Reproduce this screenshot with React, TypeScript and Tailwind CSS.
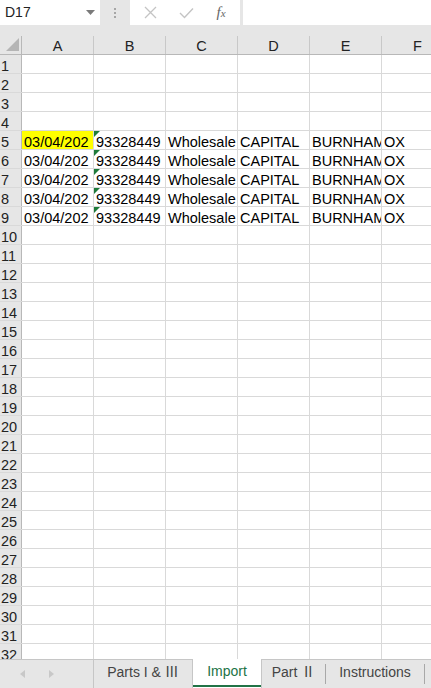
import React from 'react';

const cols = ['A', 'B', 'C', 'D', 'E', 'F'];
const dataRow = ['03/04/202', '93328449', 'Wholesale', 'CAPITAL', 'BURNHAM', 'OX'];
const rows = Array.from({ length: 32 }, (_, i) => i + 1);

function FormulaBar() {
  return (
    <div className="flex h-[36px] shrink-0 items-start bg-[#e6e6e6]">
      <div className="flex h-[25px] w-[100px] items-center justify-between bg-white pl-[5px] pr-[5px] text-[14px] text-[#222]">
        <span>D17</span>
        <svg width="9" height="5" viewBox="0 0 9 5">
          <path d="M0 0 L9 0 L4.5 5 Z" fill="#7a7a7a" />
        </svg>
      </div>
      <div className="flex h-[25px] w-[30px] flex-col items-center justify-center gap-[2px]">
        <span className="h-[2px] w-[2px] bg-[#a6a6a6]" />
        <span className="h-[2px] w-[2px] bg-[#a6a6a6]" />
        <span className="h-[2px] w-[2px] bg-[#a6a6a6]" />
      </div>
      <div className="flex h-[25px] w-[110px] items-center bg-white">
        <div className="flex w-[38px] justify-center pl-[2px]">
          <svg width="13" height="13" viewBox="0 0 13 13">
            <path d="M1 1 L12 12 M12 1 L1 12" stroke="#c4c4c4" strokeWidth="1.3" />
          </svg>
        </div>
        <div className="flex w-[36px] justify-center">
          <svg width="15" height="12" viewBox="0 0 15 12">
            <path d="M1 6 L5.5 10.5 L14 1.5" stroke="#c4c4c4" strokeWidth="1.4" fill="none" />
          </svg>
        </div>
        <div className="flex w-[34px] justify-center font-['Liberation_Serif',serif] italic text-[#666]">
          <span className="text-[15px] leading-none">f</span>
          <span className="mt-[3px] text-[11px] leading-none">x</span>
        </div>
      </div>
      <div className="ml-[3px] h-[25px] flex-1 bg-white" />
    </div>
  );
}

function HeaderRow() {
  return (
    <div className="flex h-[19px] shrink-0 border-b border-[#b8b8b8] bg-[#e6e6e6]">
      <div className="relative w-[22px] shrink-0 border-r border-[#b8b8b8]">
        <svg className="absolute left-[6px] top-[2px]" width="13" height="13" viewBox="0 0 13 13">
          <path d="M13 0 L13 13 L0 13 Z" fill="#b5b5b5" />
        </svg>
      </div>
      {cols.map((c) => (
        <div
          key={c}
          className="flex w-[72px] shrink-0 items-center justify-center border-r border-[#c8c8c8] pt-[3px] text-[14.5px] leading-none text-[#222]"
        >
          {c}
        </div>
      ))}
    </div>
  );
}

function GridRow({ n }: { n: number }) {
  const filled = n >= 5 && n <= 9;
  return (
    <div className="flex h-[19px] shrink-0 border-b border-[#d9d9d9]">
      <div className="flex w-[22px] shrink-0 items-center border-r border-[#b8b8b8] bg-[#e6e6e6] pl-[1px] pt-[4px] text-[14.5px] leading-none text-[#222]">
        {n}
      </div>
      {cols.map((c, i) => (
        <div
          key={c}
          className={`relative flex w-[72px] shrink-0 items-center overflow-hidden whitespace-nowrap border-r border-[#d9d9d9] pl-[2px] pt-[4px] text-[14.5px] leading-none text-black ${
            filled && n === 5 && i === 0 ? 'bg-[#ffff00]' : ''
          }`}
        >
          {filled && dataRow[i]}
          {filled && i === 1 && (
            <svg className="absolute left-0 top-0" width="6" height="6" viewBox="0 0 6 6">
              <path d="M0 0 L6 0 L0 6 Z" fill="#1e7b3a" />
            </svg>
          )}
        </div>
      ))}
    </div>
  );
}

function TabBar() {
  return (
    <div className="flex h-[29px] shrink-0 bg-[#e6e6e6] text-[14px] font-['Liberation_Sans','Noto_Sans_CJK_SC',sans-serif] text-[#444]">
      <div className="flex w-[93px] shrink-0 items-center border-t border-[#c6c6c6]">
        <svg className="ml-[20px]" width="5" height="8" viewBox="0 0 5 8">
          <path d="M5 0 L5 8 L0 4 Z" fill="#c8c8c8" />
        </svg>
        <svg className="ml-[24px]" width="5" height="8" viewBox="0 0 5 8">
          <path d="M0 0 L0 8 L5 4 Z" fill="#c8c8c8" />
        </svg>
      </div>
      <div className="flex w-[99px] shrink-0 items-center justify-center border-l border-t border-[#c6c6c6]">
        <span className="-mt-[4px]">Parts I &amp; Ⅲ</span>
      </div>
      <div className="relative flex w-[70px] shrink-0 items-center justify-center border-l border-r border-[#c6c6c6] bg-white text-[#217346]">
        <span className="-mt-[4px]">Import</span>
        <div className="absolute bottom-[1px] left-0 right-0 h-[2px] bg-[#217346]" />
      </div>
      <div className="flex w-[63px] shrink-0 items-center justify-center border-t border-[#c6c6c6]">
        <span className="-mt-[4px]">Part Ⅱ</span>
      </div>
      <div className="flex w-[100px] shrink-0 items-center border-t border-[#c6c6c6]">
        <div className="h-[20px] w-px bg-[#a8a8a8]" />
        <span className="-mt-[4px] flex-1 text-center">Instructions</span>
        <div className="h-[20px] w-px bg-[#a8a8a8]" />
      </div>
      <div className="flex-1 border-t border-[#c6c6c6]" />
    </div>
  );
}

export default function App() {
  return (
    <div className="flex h-[688px] w-[431px] flex-col overflow-hidden bg-white font-['Liberation_Sans','Noto_Sans_CJK_SC',sans-serif]">
      <FormulaBar />
      <div className="flex min-h-0 flex-1 flex-col overflow-hidden">
        <HeaderRow />
        {rows.map((n) => (
          <GridRow key={n} n={n} />
        ))}
      </div>
      <TabBar />
    </div>
  );
}
